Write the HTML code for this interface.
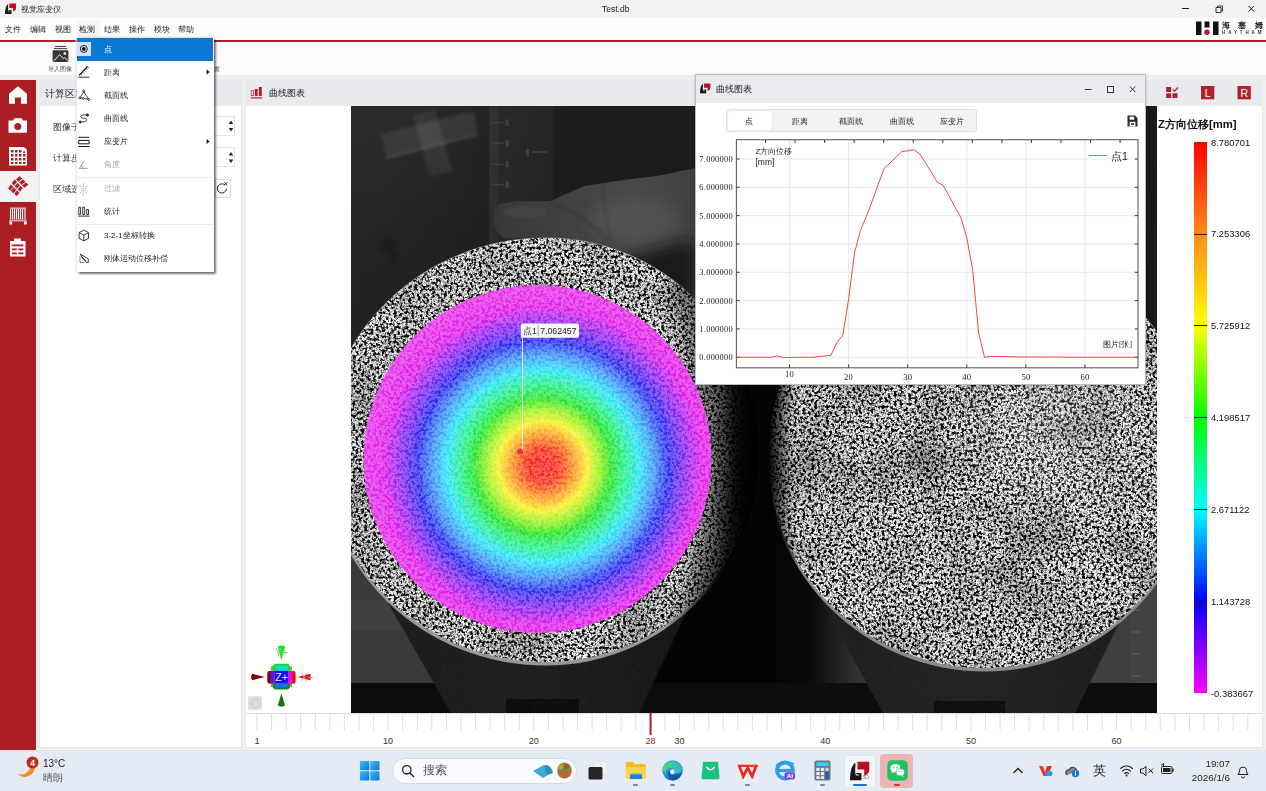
<!DOCTYPE html>
<html lang="zh"><head><meta charset="utf-8"><title>Test.db</title>
<style>
*{box-sizing:border-box;margin:0;padding:0}
html,body{width:1266px;height:791px;overflow:hidden;background:#f0f0f0;font-family:"Liberation Sans",sans-serif;color:#222}
.a{position:absolute}
.t{position:absolute;white-space:nowrap;line-height:1}
#titlebar{left:0;top:0;width:1266px;height:17.500px;background:#f3f3f3}
#menubar{left:0;top:17.500px;width:1266px;height:22.500px;background:#fbfcfc}
#redline{left:0;top:40px;width:1266px;height:2px;background:#b02028}
#toolbar{left:0;top:42px;width:1266px;height:34px;background:#fafbfb;border-bottom:1px solid #ececec}
.mi{position:absolute;top:25.800px;font-size:8px;line-height:1;color:#1a1a1a;white-space:nowrap}
#sidebar{left:0;top:80px;width:35.500px;height:670px;background:#aa1e24}
#sidesel{left:0;top:171px;width:35.500px;height:31px;background:#f2f2f2}
.panel{background:#fff}
.phead{background:#e8eaee}
.t,.mi{will-change:transform}

</style></head><body>
<svg width="0" height="0" style="position:absolute"><defs><symbol id="hlogo" viewBox="0 0 20 20"><path d="M0 19.300Q0 5.500 5.400 1.600V12H11.400V19.300z" fill="#1d1414"/><path d="M6 6.500V14H9.200" stroke="#fff" stroke-width=".9" fill="none"/><path d="M7.500 .7H19.300V9Q19.300 13 14.200 14.900V8.600H7.500z" fill="#c00d22"/></symbol></defs></svg>
<div class="a" id="titlebar"></div>
<svg class="a" style="left:5px;top:3px" width="11.500" height="11.500"><use href="#hlogo"/></svg>
<div class="t" style="left:21px;top:5.500px;font-size:8px;color:#222">视觉应变仪</div>
<div class="t" style="left:602px;top:5px;font-size:8.5px;color:#222">Test.db</div>
<svg class="a" style="left:1175px;top:0" width="91" height="18" viewBox="0 0 91 18"><g stroke="#222" stroke-width="1" fill="none"><path d="M7 8.5h7"/><path d="M41 7.5h5v5h-5z M42.5 7.5v-1.5h5v5h-1.5" stroke-width=".9"/><path d="M73.5 6l5.5 5.5M79 6l-5.500 5.500"/></g></svg>
<div class="a" id="menubar"></div>
<div class="a" style="left:77px;top:19px;width:23px;height:20px;background:#f5f6f6"></div>
<div class="mi" style="left:5px">文件</div><div class="mi" style="left:29.500px">编辑</div><div class="mi" style="left:54.500px">视图</div><div class="mi" style="left:79px">检测</div><div class="mi" style="left:103.500px">结果</div><div class="mi" style="left:128.500px">操作</div><div class="mi" style="left:153.500px">模块</div><div class="mi" style="left:178px">帮助</div>
<!-- brand logo -->
<svg class="a" style="left:1194px;top:20px" width="70" height="16" viewBox="0 0 70 16"><rect x="2" y="1.500" width="5.500" height="13.500" fill="#111"/><rect x="19" y="1.500" width="5.500" height="13.500" fill="#111"/><rect x="10.500" y="1.500" width="5" height="6" fill="#111"/><circle cx="13" cy="12.300" r="2.700" fill="#b01e26"/></svg>
<div class="t" style="left:1221.500px;top:21.500px;font-size:7.500px;font-weight:bold;letter-spacing:8.300px;color:#111">海塞姆</div>
<div class="t" style="left:1221.500px;top:30.500px;font-size:4.500px;letter-spacing:2.900px;color:#333;font-weight:bold">HAYTHAM</div>
<div class="a" id="redline"></div>
<div class="a" id="toolbar"></div>
<svg class="a" style="left:51px;top:45px" width="19" height="18" viewBox="51 45 19 18"><path d="M54.900 46.500h11.300" stroke="#4a4a4a" stroke-width="1.100"/><path d="M53.900 48.600h13.300" stroke="#4a4a4a" stroke-width="1.100"/><rect x="52.600" y="50.200" width="15.800" height="11.700" rx=".8" fill="#383838"/><path d="M53.700 61.200l5.800-6.500 4.100 4.050 1.200-1.250 3.100 3.200" stroke="#fff" stroke-width=".9" fill="none"/><circle cx="64.800" cy="53.500" r="1.300" fill="#fff"/></svg>
<div class="t" style="left:48.200px;top:65.700px;font-size:6.200px;color:#555">导入图像</div>
<div class="t" style="left:214px;top:66px;font-size:6px;color:#444">置</div>
<!-- sidebar -->
<div class="a" id="sidebar"></div>
<div class="a" id="sidesel"></div>
<svg class="a" style="left:0;top:80px" width="36" height="190" viewBox="0 0 36 190">
<!-- home -->
<path d="M18 6.200l9 7.500v10h-6v-6.200h-6v6.200h-6v-10z" fill="#fff"/>
<!-- camera -->
<path d="M8.500 40.500h4.500l1.300-2.200h7.400l1.300 2.200h4v12.300h-18.500z" fill="#fff"/><circle cx="17.800" cy="46.500" r="3.500" fill="#aa1e24"/>
<!-- grid -->
<path d="M9 67h15l3 3v15.500h-18z" fill="#fff"/>
<g fill="#aa1e24"><rect x="11" y="70" width="2.500" height="2.500"/><rect x="15" y="70" width="2.500" height="2.500"/><rect x="19" y="70" width="2.500" height="2.500"/><rect x="23" y="71.500" width="2" height="1.500"/>
<rect x="11" y="74" width="2.500" height="2.500"/><rect x="15" y="74" width="2.500" height="2.500"/><rect x="19" y="74" width="2.500" height="2.500"/><rect x="23" y="74" width="2.500" height="2.500"/>
<rect x="11" y="78" width="2.500" height="2.500"/><rect x="15" y="78" width="2.500" height="2.500"/><rect x="19" y="78" width="2.500" height="2.500"/><rect x="23" y="78" width="2.500" height="2.500"/>
<rect x="11" y="82" width="2.500" height="2"/><rect x="15" y="82" width="2.500" height="2"/><rect x="19" y="82" width="2.500" height="2"/><rect x="23" y="82" width="2.500" height="2"/></g>
<!-- selected mesh icon -->
<path d="M19.73 96.59L21.83 98.70L18.49 101.24L16.39 99.14zM23.07 99.85L25.02 101.81L21.52 104.35L19.57 102.40zM26.03 102.81L27.98 104.76L24.47 107.31L22.52 105.36zM14.63 99.76L16.58 101.86L14.03 105.36L12.08 103.26zM17.59 103.18L19.54 105.13L16.99 108.31L15.04 106.36zM20.46 106.13L22.42 108.08L20.03 111.27L18.08 109.32zM10.99 104.91L12.94 106.71L10.39 110.22L8.44 108.41zM13.87 107.72L15.97 109.68L13.43 112.86L11.32 110.91zM16.98 110.68L19.08 112.63L16.69 115.82L14.59 113.87z" fill="#ad1f25" stroke="#ad1f25" stroke-width=".7" stroke-linejoin="round"/>
<!-- film -->
<rect x="10" y="127.500" width="16" height="12" fill="#fff"/>
<g stroke="#aa1e24" stroke-width=".9"><path d="M11.500 129v10.500M13.500 129v10.500M15.500 129v10.500M17.500 129v10.500M19.500 129v10.500M21.500 129v10.500M23.500 129v10.500M25 129v10.500"/></g>
<rect x="10" y="127.500" width="16" height="1.200" fill="#aa1e24" opacity=".5"/>
<path d="M9.500 140.800h17" stroke="#fff" stroke-width="1.400" stroke-dasharray="1.200 .8"/>
<path d="M9.500 141.500h2.600v3h-2.600zM24 141.500h2.600v3h-2.600z" fill="#fff"/>
<!-- clipboard -->
<path d="M10 161h4v-2.500h7v2.500h4.500v15.500h-15.500z" fill="#fff"/>
<g fill="#aa1e24"><rect x="12" y="164.500" width="11.500" height="1.800"/><rect x="12" y="168.500" width="4.800" height="1.800"/><rect x="18.300" y="168.500" width="5.200" height="1.800"/><rect x="12" y="172.500" width="4.800" height="1.800"/><rect x="18.300" y="172.500" width="5.200" height="1.800"/></g>
</svg>

<div class="a panel" style="left:38.500px;top:80px;width:203px;height:667.500px;border:1px solid #e6e6e6;border-top:none"></div>
<div class="a phead" style="left:38.500px;top:80px;width:203px;height:25.500px"></div>
<div class="t" style="left:45px;top:88.600px;font-size:9.500px;color:#222">计算区域</div>
<div class="t" style="left:53px;top:122.500px;font-size:9px;color:#333">图像子区</div>
<div class="t" style="left:53px;top:153.500px;font-size:9px;color:#333">计算步长</div>
<div class="t" style="left:53px;top:184.500px;font-size:9px;color:#333">区域选择</div>
<div class="a" style="left:120px;top:116px;width:114.500px;height:19.500px;border:1px solid #e4e4e4;background:#fff"></div>
<div class="a" style="left:120px;top:147.300px;width:114.500px;height:20.200px;border:1px solid #e4e4e4;background:#fff"></div>
<svg class="a" style="left:227px;top:118px" width="8" height="48" viewBox="0 0 8 48"><g fill="#222"><path d="M4 2.500l2.300 3.500h-4.600z"/><path d="M1.700 10h4.600l-2.300 3.500z"/><path d="M4 34l2.300 3.500h-4.600z"/><path d="M1.700 41.500h4.600l-2.300 3.500z"/></g></svg>
<div class="a" style="left:214.500px;top:178.500px;width:16px;height:19px;border:1px solid #ddd;background:#fff"></div>
<svg class="a" style="left:214.700px;top:180.300px" width="14" height="16" viewBox="0 0 14 16"><path d="M10.200 5.200a4.600 4.600 0 1 0 1.300 3.600" fill="none" stroke="#222" stroke-width="1"/><path d="M9.200 2.200l3 3M12.200 2.200l-3 3" stroke="#222" stroke-width=".9"/></svg>

<div class="a panel" style="left:245px;top:80px;width:1017.500px;height:667.500px;border:1px solid #e6e6e6;border-top:none"></div>
<div class="a phead" style="left:245px;top:80px;width:1017.500px;height:25.500px"></div>
<svg class="a" style="left:250px;top:86px" width="13" height="13" viewBox="0 0 13 13"><rect x="1.200" y="4.700" width="2.200" height="5" fill="none" stroke="#b02028" stroke-width=".7"/><rect x="4.800" y="3" width="2.800" height="7" fill="#b02028"/><rect x="8.800" y="1" width="3" height="9" fill="#b02028"/><rect x=".8" y="11.300" width="11.400" height="1.200" fill="#b02028"/></svg>
<div class="t" style="left:268.500px;top:88.500px;font-size:8.700px;color:#222">曲线图表</div>
<!-- header right icons -->
<svg class="a" style="left:1160px;top:84px" width="100" height="18" viewBox="0 0 100 18"><g fill="#b02028"><rect x="6.200" y="3" width="5" height="5"/><rect x="6.200" y="9.300" width="5" height="4.700"/><rect x="12.500" y="9.300" width="5" height="4.700"/><path d="M12.300 6l1-1 1.300 1.300 3-3.300.9.900-3.900 4.200z"/><rect x="41" y="2" width="13.300" height="13.300"/><rect x="77.500" y="2" width="13.300" height="13.300"/></g>
<text x="47.700" y="12.500" font-family="Liberation Sans" font-size="10.500" fill="#fff" text-anchor="middle">L</text><text x="84.200" y="12.500" font-family="Liberation Sans" font-size="10.500" fill="#fff" text-anchor="middle">R</text></svg>

<svg class="a" style="left:351px;top:106px" width="806" height="607" viewBox="351 106 806 607">
<defs>
<filter id="spk" x="0" y="0" width="100%" height="100%" color-interpolation-filters="sRGB">
<feTurbulence type="fractalNoise" baseFrequency="0.6" numOctaves="2" seed="7"/><feColorMatrix type="matrix" values="0 0 0 1.700 -.03  0 0 0 1.700 -.03  0 0 0 1.700 -.03  0 0 0 0 1" result="A"/>
<feTurbulence type="fractalNoise" baseFrequency="0.34" numOctaves="2" seed="3"/><feColorMatrix type="matrix" values="0 0 0 5.500 -1.940  0 0 0 5.500 -1.940  0 0 0 5.500 -1.940  0 0 0 0 1" result="B"/>
<feComposite in="A" in2="B" operator="arithmetic" k1="1" k2="0" k3="0" k4="0.05"/><feGaussianBlur stdDeviation="0.4"/></filter>
<filter id="wn" x="0" y="0" width="100%" height="100%" color-interpolation-filters="sRGB">
<feTurbulence type="fractalNoise" baseFrequency="0.6" numOctaves="2" seed="7"/><feColorMatrix type="matrix" values="0 0 0 1.700 -.03  0 0 0 1.700 -.03  0 0 0 1.700 -.03  0 0 0 0 1" result="A"/>
<feTurbulence type="fractalNoise" baseFrequency="0.34" numOctaves="2" seed="3"/><feColorMatrix type="matrix" values="0 0 0 5.500 -1.940  0 0 0 5.500 -1.940  0 0 0 5.500 -1.940  0 0 0 0 1" result="B"/>
<feComposite in="A" in2="B" operator="arithmetic" k1="1" k2="0" k3="0" k4="0.05"/><feGaussianBlur stdDeviation="0.6"/>
<feColorMatrix type="matrix" values="0 0 0 0 1  0 0 0 0 1  0 0 0 0 1  .32 0 0 0 0"/></filter>
<filter id="lf" x="0" y="0" width="100%" height="100%" color-interpolation-filters="sRGB"><feTurbulence type="fractalNoise" baseFrequency="0.018" numOctaves="2" seed="9"/><feColorMatrix type="matrix" values="0 0 0 0 0  0 0 0 0 0  0 0 0 0 0  0 0 0 .6 -.24"/></filter>
<filter id="bl6" x="-30%" y="-30%" width="160%" height="160%"><feGaussianBlur stdDeviation="7"/></filter><filter id="bl2" x="-30%" y="-30%" width="160%" height="160%"><feGaussianBlur stdDeviation="1.500"/></filter><filter id="grain" x="0" y="0" width="100%" height="100%" color-interpolation-filters="sRGB"><feTurbulence type="fractalNoise" baseFrequency="0.9" numOctaves="1" seed="5"/><feColorMatrix type="matrix" values="0 0 0 0 1  0 0 0 0 1  0 0 0 0 1  0 0 0 1.200 -.6"/><feComposite in2="SourceGraphic" operator="in"/></filter>
<linearGradient id="bgg" x1="0" y1="0" x2="1" y2="0"><stop offset="0" stop-color="#262626"/><stop offset=".17" stop-color="#202020"/><stop offset=".3" stop-color="#1d1d1d"/><stop offset="1" stop-color="#1b1b1b"/></linearGradient><radialGradient id="tl" gradientUnits="userSpaceOnUse" cx="400" cy="120" r="170"><stop offset="0" stop-color="#fff" stop-opacity=".03"/><stop offset="1" stop-color="#fff" stop-opacity="0"/></radialGradient>
<linearGradient id="bgv" x1="0" y1="0" x2="0" y2="1"><stop offset="0" stop-color="#000" stop-opacity="0"/><stop offset=".55" stop-color="#000" stop-opacity=".15"/><stop offset="1" stop-color="#000" stop-opacity=".45"/></linearGradient>
<radialGradient id="rb" gradientUnits="userSpaceOnUse" cx="543" cy="466" r="182">
<stop offset="0" stop-color="#f21c18"/><stop offset=".09" stop-color="#f62a16"/><stop offset=".165" stop-color="#fa8a18"/><stop offset=".245" stop-color="#f6f020"/><stop offset=".31" stop-color="#98f01a"/><stop offset=".375" stop-color="#20e420"/><stop offset=".455" stop-color="#20ee90"/><stop offset=".53" stop-color="#24e4f6"/><stop offset=".61" stop-color="#3890f8"/><stop offset=".69" stop-color="#2424f0"/><stop offset=".785" stop-color="#8a22f0"/><stop offset=".875" stop-color="#e018ea"/><stop offset="1" stop-color="#e62eea"/></radialGradient>
<radialGradient id="dl" gradientUnits="userSpaceOnUse" cx="0" cy="0" r="1" gradientTransform="translate(440 450) scale(310 500)"><stop offset="0" stop-color="#000" stop-opacity="0"/><stop offset=".8" stop-color="#000" stop-opacity="0"/><stop offset=".88" stop-color="#000" stop-opacity=".45"/><stop offset=".95" stop-color="#000" stop-opacity=".9"/><stop offset="1" stop-color="#000" stop-opacity="1"/></radialGradient>
<radialGradient id="dr" gradientUnits="userSpaceOnUse" cx="0" cy="0" r="1" gradientTransform="translate(1290 460) scale(522 800)"><stop offset="0" stop-color="#000" stop-opacity="0"/><stop offset=".95" stop-color="#000" stop-opacity="0"/><stop offset=".985" stop-color="#000" stop-opacity=".7"/><stop offset="1" stop-color="#000" stop-opacity="1"/></radialGradient><radialGradient id="glare" gradientUnits="userSpaceOnUse" cx="1050" cy="425" r="120"><stop offset="0" stop-color="#fff" stop-opacity=".16"/><stop offset="1" stop-color="#fff" stop-opacity="0"/></radialGradient>
<linearGradient id="hg" x1="0" y1="0" x2="1" y2="0"><stop offset="0" stop-color="#383838"/><stop offset=".25" stop-color="#3e3e3e"/><stop offset=".7" stop-color="#494949"/><stop offset="1" stop-color="#404040"/></linearGradient>
<linearGradient id="pg" x1="0" y1="0" x2="1" y2="0"><stop offset="0" stop-color="#1c1c1c"/><stop offset=".5" stop-color="#1e1e1e"/><stop offset="1" stop-color="#151515"/></linearGradient>
<linearGradient id="pg2" x1="0" y1="0" x2="1" y2="0"><stop offset="0" stop-color="#1e1e1e"/><stop offset=".5" stop-color="#232323"/><stop offset="1" stop-color="#1c1c1c"/></linearGradient>
<linearGradient id="midg" x1="0" y1="0" x2="1" y2="0"><stop offset="0" stop-color="#050505"/><stop offset=".35" stop-color="#0a0a0a"/><stop offset="1" stop-color="#454545"/></linearGradient>
<clipPath id="cl"><path d="M546 238A222 212 0 0 0 546 662A212 212 0 0 0 546 238z"/></clipPath>
<clipPath id="cr"><path d="M985 244A217 212 0 0 0 985 668A212 212 0 0 0 985 244z"/></clipPath>
<linearGradient id="rimL" gradientUnits="userSpaceOnUse" x1="680" y1="0" x2="735" y2="0"><stop offset="0" stop-color="#969696"/><stop offset="1" stop-color="#050505"/></linearGradient><linearGradient id="rimR" gradientUnits="userSpaceOnUse" x1="770" y1="0" x2="800" y2="0"><stop offset="0" stop-color="#050505"/><stop offset="1" stop-color="#8a8a8a"/></linearGradient><clipPath id="clo"><path d="M546 237.500A223 214 0 0 0 546 665.500A213 214 0 0 0 546 237.500z"/></clipPath><clipPath id="cro"><path d="M985 243.500A218 214 0 0 0 985 671.500A213 214 0 0 0 985 243.500z"/></clipPath><clipPath id="crb"><circle cx="537.500" cy="459" r="174"/></clipPath>
</defs>
<!-- background -->
<rect x="351" y="106" width="806" height="607" fill="url(#bgg)"/>
<rect x="351" y="106" width="400" height="200" fill="url(#tl)"/><rect x="489" y="106" width="64" height="200" fill="#fff" opacity=".035"/>
<rect x="489" y="106" width="9" height="200" fill="#fff" opacity=".035"/>
<g stroke="#424242" stroke-width="1.300"><path d="M491 122.600h12.500M491 143h12.500M491 164.300h12.500M491 184.500h12.500M531 152h17"/></g>
<g fill="#404040"><rect x="505.500" y="119.500" width="3.500" height="6.500"/><rect x="505.500" y="140" width="3.500" height="6.500"/><rect x="505.500" y="161" width="3.500" height="6.500"/><rect x="505.500" y="181.500" width="3.500" height="6.500"/><rect x="526" y="149" width="3" height="6.500"/></g>
<!-- tape cross -->
<g filter="url(#bl2)"><path d="M381 134l92-23 6 24-92 24z" fill="#fff" opacity=".085"/><path d="M413 115l22-6 17 62-22 6z" fill="#fff" opacity=".07"/><path d="M386 158l90-23" stroke="#fff" stroke-width="1.500" opacity=".12"/></g>
<path d="M381 240l8-4 3 6 5-2 2 5-6 3 5 12-5 3-6-13-6 3-2-5 6-3z" fill="#121212" opacity=".45" filter="url(#bl2)"/>
<rect x="351" y="106" width="806" height="607" fill="url(#bgv)"/>
<!-- lower left clutter -->
<path d="M351 440l28 46 18 80 4 0h-50z" fill="#272727"/>
<path d="M351 462l16-22 14 42-30 40z" fill="#333"/>
<path d="M351 548h30l62 138h-92z" fill="#3a3a3a"/>
<path d="M351 600h50l12 30h-62z" fill="#454545" opacity=".6"/>

<!-- dark right/bottom areas -->
<path d="M735 384h422v329h-520l50-110z" fill="#040404"/>
<path d="M772 500h40l70 186h-110z" fill="url(#midg)"/>
<path d="M1090 580h67v109h-95z" fill="#3e3e3e"/>
<rect x="1130" y="580" width="27" height="109" fill="#464646" opacity=".6"/>
<g stroke="#606060" stroke-width="1"><path d="M1132 610h9M1132 632h9M1132 654h9M1132 676h9"/></g>
<rect x="351" y="683" width="806" height="30" fill="#0d0d0d"/>
<!-- hand -->
<path d="M494.500 226L493.700 214.500Q494 206 500 203.500L517 201.200L550 201.200L584 186L622 180.300L660 175.600L695 168V310L640 275L590 248L544 237.500L506 238.500Q497 234 494.500 226z" fill="url(#hg)"/>
<ellipse cx="634" cy="220" rx="44" ry="22" fill="#565656" opacity=".7" filter="url(#bl6)"/>
<ellipse cx="525" cy="212" rx="22" ry="6" fill="#4a4a4a" opacity=".6" filter="url(#bl2)"/>
<path d="M550 203q34 10 58 38" stroke="#242424" stroke-width="1.500" fill="none" opacity=".5" filter="url(#bl2)"/>
<path d="M603 186q2 30 8 56" stroke="#282828" stroke-width="1.200" fill="none" opacity=".45" filter="url(#bl2)"/>
<path d="M610 262l85-22v72l-50-26z" fill="#151515" opacity=".9" filter="url(#bl6)"/>
<!-- pedestals -->
<path d="M388 603l63 110h188l49-104z" fill="url(#pg)"/>
<path d="M822 602l61 111h192l50-102z" fill="url(#pg2)"/>
<rect x="506" y="699" width="73" height="14" fill="#0c0c0c"/><rect x="934" y="701" width="71" height="12" fill="#0e0e0e"/>
<g opacity=".16"><path d="M388 603l63 110h188l49-104z" filter="url(#grain)"/><path d="M822 602l61 111h192l50-102z" filter="url(#grain)"/></g>
<!-- left disk -->
<g clip-path="url(#clo)"><rect x="320" y="230" width="450" height="440" fill="url(#rimL)"/><g clip-path="url(#cl)"><rect x="351" y="230" width="410" height="440" filter="url(#spk)"/><rect x="351" y="230" width="410" height="440" filter="url(#lf)"/></g><rect x="320" y="230" width="450" height="440" fill="url(#dl)"/></g>
<!-- right disk -->
<g clip-path="url(#cro)"><rect x="760" y="240" width="400" height="436" fill="url(#rimR)"/><g clip-path="url(#cr)"><rect x="765" y="240" width="392" height="432" filter="url(#spk)"/><rect x="765" y="240" width="392" height="432" filter="url(#lf)"/><rect x="765" y="240" width="440" height="432" fill="url(#glare)"/></g><rect x="760" y="240" width="440" height="436" fill="url(#dr)"/></g>
<!-- rainbow -->
<circle cx="537.500" cy="459" r="174" fill="url(#rb)"/>
<g clip-path="url(#crb)"><rect x="360" y="282" width="356" height="356" filter="url(#wn)"/></g>
<!-- label -->
<path d="M522.500 337v114" stroke="#f4f4f4" stroke-width="1" opacity=".85"/>
<circle cx="520" cy="451.500" r="3" fill="#e8334f"/>
<rect x="520.800" y="323.400" width="58.200" height="14.300" rx="1.800" fill="#f8f8f6"/>
<path d="M538.200 325.500v10.500" stroke="#aaa" stroke-width="1.100"/>
<text x="523" y="334.400" font-family="Liberation Sans, sans-serif" font-size="8.600" fill="#222">点1</text>
<text x="540.300" y="334.400" font-family="Liberation Sans, sans-serif" font-size="8.700" fill="#222">7.062457</text>
</svg>

<div class="t" style="left:1158px;top:118.500px;font-size:11.300px;font-weight:bold;color:#111">Z方向位移[mm]</div>
<div class="a" style="left:1193.500px;top:142px;width:13.500px;height:551px;background:linear-gradient(to bottom,#ff0000 0%,#ff8a1c 16.670%,#ffff00 33.330%,#00ff00 50%,#00ffff 66.670%,#0000ff 83.330%,#ff00ff 100%)"></div>
<div class="t" style="left:1210.500px;top:137.6px;font-size:9.400px;color:#111">8.780701</div>
<div class="t" style="left:1210.500px;top:229.4px;font-size:9.400px;color:#111">7.253306</div>
<div class="a" style="left:1193.500px;top:233.5px;width:13.500px;height:1px;background:#222"></div>
<div class="t" style="left:1210.500px;top:321.3px;font-size:9.400px;color:#111">5.725912</div>
<div class="a" style="left:1193.500px;top:325.4px;width:13.500px;height:1px;background:#222"></div>
<div class="t" style="left:1210.500px;top:413.1px;font-size:9.400px;color:#111">4.198517</div>
<div class="a" style="left:1193.500px;top:417.2px;width:13.500px;height:1px;background:#222"></div>
<div class="t" style="left:1210.500px;top:504.9px;font-size:9.400px;color:#111">2.671122</div>
<div class="a" style="left:1193.500px;top:509.0px;width:13.500px;height:1px;background:#222"></div>
<div class="t" style="left:1210.500px;top:596.7px;font-size:9.400px;color:#111">1.143728</div>
<div class="a" style="left:1193.500px;top:600.9px;width:13.500px;height:1px;background:#222"></div>
<div class="t" style="left:1210.500px;top:688.6px;font-size:9.400px;color:#111">-0.383667</div>

<svg class="a" style="left:246px;top:713px" width="1016" height="34" viewBox="246 713 1016 34">
<path d="M257.0 713v17M271.6 713v17M286.1 713v17M300.7 713v17M315.3 713v17M329.9 713v17M344.4 713v17M359.0 713v17M373.6 713v17M388.1 713v17M402.7 713v17M417.3 713v17M431.8 713v17M446.4 713v17M461.0 713v17M475.6 713v17M490.1 713v17M504.7 713v17M519.3 713v17M533.8 713v17M548.4 713v17M563.0 713v17M577.5 713v17M592.1 713v17M606.7 713v17M621.2 713v17M635.8 713v17M650.4 713v17M665.0 713v17M679.5 713v17M694.1 713v17M708.7 713v17M723.2 713v17M737.8 713v17M752.4 713v17M767.0 713v17M781.5 713v17M796.1 713v17M810.7 713v17M825.2 713v17M839.8 713v17M854.4 713v17M868.9 713v17M883.5 713v17M898.1 713v17M912.6 713v17M927.2 713v17M941.8 713v17M956.4 713v17M970.9 713v17M985.5 713v17M1000.1 713v17M1014.6 713v17M1029.2 713v17M1043.8 713v17M1058.3 713v17M1072.9 713v17M1087.5 713v17M1102.1 713v17M1116.6 713v17M1131.2 713v17M1145.8 713v17M1160.3 713v17M1174.9 713v17M1189.5 713v17M1204.1 713v17M1218.6 713v17M1233.2 713v17M1247.8 713v17" stroke="#dadada" stroke-width=".9"/>
<path d="M246 713.500H1262" stroke="#e0e0e0" stroke-width="1"/><rect x="649.600" y="713" width="2" height="22" fill="#b02028"/>
<text x="257.0" y="743.500" font-family="Liberation Sans, sans-serif" font-size="9" fill="#333" text-anchor="middle">1</text>
<text x="388.1" y="743.500" font-family="Liberation Sans, sans-serif" font-size="9" fill="#333" text-anchor="middle">10</text>
<text x="533.8" y="743.500" font-family="Liberation Sans, sans-serif" font-size="9" fill="#333" text-anchor="middle">20</text>
<text x="679.5" y="743.500" font-family="Liberation Sans, sans-serif" font-size="9" fill="#333" text-anchor="middle">30</text>
<text x="825.2" y="743.500" font-family="Liberation Sans, sans-serif" font-size="9" fill="#333" text-anchor="middle">40</text>
<text x="970.9" y="743.500" font-family="Liberation Sans, sans-serif" font-size="9" fill="#333" text-anchor="middle">50</text>
<text x="1116.6" y="743.500" font-family="Liberation Sans, sans-serif" font-size="9" fill="#333" text-anchor="middle">60</text>
<text x="650.4" y="743.500" font-family="Liberation Sans, sans-serif" font-size="9" fill="#b02028" text-anchor="middle">28</text>
</svg>
<svg class="a" style="left:246px;top:640px" width="80" height="73" viewBox="246 640 80 73">
<rect x="248" y="696.200" width="14" height="13.600" rx="1" fill="#d6dee8"/><path d="M258.800 700.300a4.300 4.300 0 1 0 1.200 3" fill="none" stroke="#c0c8d2" stroke-width="1"/><path d="M257.500 698.500l2 1.800-2.400.8z" fill="#c0c8d2"/>
<path d="M277.600 646.500q3.800-2 7.600 0l-3.800 14z" fill="#18f018"/>
<text x="281.500" y="655.500" font-family="Liberation Sans, sans-serif" font-size="10.500" fill="#a8a8a8" text-anchor="middle" opacity=".9">Y+</text>
<path d="M281.400 693.600l3.600 12q-3.600 2.200-7.200 0z" fill="#0c7a0c"/>
<path d="M264.700 677l-12.500 3.300q-2.200-3.300 0-6.600z" fill="#7a0808"/>
<path d="M297.600 677l12.500-3.300q2.200 3.300 0 6.600z" fill="#f01010"/>
<text x="307" y="681" font-family="Liberation Sans, sans-serif" font-size="10.500" fill="#a8a8a8" text-anchor="middle" opacity=".9">X+</text>
<g>
<path d="M270.800 666.500h4v4h-4zM288 666.500h4v4h-4zM270.800 683h4v4h-4zM288 683h4v4h-4z" fill="#a8a020"/>
<path d="M274.800 663.800h13.200l2 2.200v5h-17.200v-5z" fill="#10e010"/>
<path d="M274.800 689.600h13.200l2-2.200v-4h-17.200v4z" fill="#108a20"/>
<path d="M268.300 671h4v12.500h-4l-1-2v-8.500z" fill="#7a0a0a"/>
<path d="M294.600 671h-4v12.500h4l1-2v-8.500z" fill="#f00808"/>
<rect x="274.800" y="665.800" width="13.200" height="5.200" fill="#10d8d8"/>
<rect x="274.800" y="683.500" width="13.200" height="4" fill="#2070e0"/>
<rect x="270.300" y="670.900" width="4.500" height="12.600" fill="#7010d0"/>
<rect x="288" y="670.900" width="4.500" height="12.600" fill="#e010e0"/>
<rect x="274.800" y="670.900" width="13.200" height="12.600" fill="#1212ee"/>
</g>
<text x="281.500" y="681.300" font-family="Liberation Sans, sans-serif" font-size="10.500" fill="#e8e8e8" text-anchor="middle">Z+</text>
</svg>

<div class="a" style="left:694.5px;top:74px;width:451.5px;height:310.500px;background:#fff;border:1px solid #b9bcc2;box-shadow:0 1px 3px rgba(0,0,0,.2)"></div>
<div class="a" style="left:695.5px;top:75px;width:449.5px;height:27.500px;background:#e9ebef"></div>
<svg class="a" style="left:699.800px;top:83.400px" width="10.800" height="10.800"><use href="#hlogo"/></svg>
<div class="t" style="left:715.500px;top:85px;font-size:8.500px;color:#222">曲线图表</div>
<svg class="a" style="left:1078px;top:80px" width="66" height="18" viewBox="1078 80 66 18"><g stroke="#333" stroke-width="1" fill="none"><path d="M1085 89.500h6.500"/><rect x="1107.500" y="86.500" width="6" height="6"/><path d="M1129.800 86.500l5.500 5.500M1135.300 86.500l-5.500 5.500"/></g></svg>
<div class="a" style="left:725.500px;top:109px;width:251px;height:23px;background:#f3f3f3;border:1px solid #e0e0e0;border-radius:2.500px"></div>
<div class="a" style="left:727.500px;top:111px;width:44px;height:19px;background:#fff;border-radius:2px;box-shadow:0 0 1px rgba(0,0,0,.25)"></div>
<div class="t" style="left:719.25px;width:60px;text-align:center;top:117.500px;font-size:7.800px;color:#222">点</div>
<div class="t" style="left:770px;width:60px;text-align:center;top:117.500px;font-size:7.800px;color:#222">距离</div>
<div class="t" style="left:821.25px;width:60px;text-align:center;top:117.500px;font-size:7.800px;color:#222">截面线</div>
<div class="t" style="left:871.5px;width:60px;text-align:center;top:117.500px;font-size:7.800px;color:#222">曲面线</div>
<div class="t" style="left:922px;width:60px;text-align:center;top:117.500px;font-size:7.800px;color:#222">应变片</div>
<svg class="a" style="left:1127px;top:114.500px" width="11" height="12" viewBox="0 0 11 12"><path d="M.5 .5h7.500l2.500 2.500v8.500h-10z" fill="#2a2a2a"/><rect x="2.600" y="1.700" width="4.600" height="3" fill="#fff"/><rect x="2.600" y="6.800" width="5.800" height="4.700" fill="#fff"/><rect x="4" y="8.300" width="3" height="1.600" fill="#2a2a2a"/></svg>
<svg class="a" style="left:695px;top:133px" width="451" height="250" viewBox="695 133 451 250">
<path d="M736.4 357.25H1138M736.4 328.93H1138M736.4 300.61H1138M736.4 272.29H1138M736.4 243.97H1138M736.4 215.65H1138M736.4 187.33H1138M736.4 159.01H1138M789.57 139.7V367.8M848.64 139.7V367.8M907.72 139.7V367.8M966.79 139.7V367.8M1025.87 139.7V367.8M1084.94 139.7V367.8" stroke="#e8e8e8" stroke-width="1" fill="none"/>
<rect x="736.4" y="139.7" width="401.6" height="228.1" fill="none" stroke="#636363" stroke-width="1.150"/>
<path d="M736.4 357.25h3.300M1138 357.25h-3.300M736.4 328.93h3.300M1138 328.93h-3.300M736.4 300.61h3.300M1138 300.61h-3.300M736.4 272.29h3.300M1138 272.29h-3.300M736.4 243.97h3.300M1138 243.97h-3.300M736.4 215.65h3.300M1138 215.65h-3.300M736.4 187.33h3.300M1138 187.33h-3.300M736.4 159.01h3.300M1138 159.01h-3.300M765.50 139.7v3.300M795.05 139.7v3.300M824.60 139.7v3.300M854.15 139.7v3.300M883.70 139.7v3.300M913.25 139.7v3.300M942.80 139.7v3.300M972.35 139.7v3.300M1001.90 139.7v3.300M1031.45 139.7v3.300M1061.00 139.7v3.300M1090.55 139.7v3.300M1120.10 139.7v3.300M789.57 367.8v-3.300M848.64 367.8v-3.300M907.72 367.8v-3.300M966.79 367.8v-3.300M1025.87 367.8v-3.300M1084.94 367.8v-3.300" stroke="#3a3a3a" stroke-width="1" fill="none"/>
<text x="733" y="360.2" font-family="Liberation Serif, serif" font-size="8.400" letter-spacing=".28" fill="#222" text-anchor="end">0.000000</text>
<text x="733" y="331.9" font-family="Liberation Serif, serif" font-size="8.400" letter-spacing=".28" fill="#222" text-anchor="end">1.000000</text>
<text x="733" y="303.6" font-family="Liberation Serif, serif" font-size="8.400" letter-spacing=".28" fill="#222" text-anchor="end">2.000000</text>
<text x="733" y="275.3" font-family="Liberation Serif, serif" font-size="8.400" letter-spacing=".28" fill="#222" text-anchor="end">3.000000</text>
<text x="733" y="247.0" font-family="Liberation Serif, serif" font-size="8.400" letter-spacing=".28" fill="#222" text-anchor="end">4.000000</text>
<text x="733" y="218.7" font-family="Liberation Serif, serif" font-size="8.400" letter-spacing=".28" fill="#222" text-anchor="end">5.000000</text>
<text x="733" y="190.3" font-family="Liberation Serif, serif" font-size="8.400" letter-spacing=".28" fill="#222" text-anchor="end">6.000000</text>
<text x="733" y="162.0" font-family="Liberation Serif, serif" font-size="8.400" letter-spacing=".28" fill="#222" text-anchor="end">7.000000</text>
<text x="789.6" y="376.6" font-family="Liberation Serif, serif" font-size="8.600" letter-spacing=".2" fill="#222" text-anchor="middle">10</text>
<text x="848.6" y="379.6" font-family="Liberation Serif, serif" font-size="8.600" letter-spacing=".2" fill="#222" text-anchor="middle">20</text>
<text x="907.7" y="379.6" font-family="Liberation Serif, serif" font-size="8.600" letter-spacing=".2" fill="#222" text-anchor="middle">30</text>
<text x="966.8" y="379.6" font-family="Liberation Serif, serif" font-size="8.600" letter-spacing=".2" fill="#222" text-anchor="middle">40</text>
<text x="1025.9" y="379.6" font-family="Liberation Serif, serif" font-size="8.600" letter-spacing=".2" fill="#222" text-anchor="middle">50</text>
<text x="1084.9" y="379.6" font-family="Liberation Serif, serif" font-size="8.600" letter-spacing=".2" fill="#222" text-anchor="middle">60</text>
<polyline points="736.40,357.25 742.31,357.25 748.22,357.25 754.12,357.25 760.03,357.25 765.94,357.25 771.85,357.25 777.75,355.98 783.66,357.67 789.57,357.53 795.48,357.25 801.38,357.25 807.29,357.25 813.20,357.25 819.11,356.40 825.01,355.98 830.92,355.27 836.83,342.81 842.74,335.27 848.64,299.19 854.55,252.75 860.46,230.38 866.37,216.50 872.27,200.92 878.18,184.50 884.09,168.64 890.00,162.97 895.90,157.31 901.81,151.65 907.72,150.80 913.62,149.66 919.53,153.63 925.44,162.69 931.35,172.32 937.25,182.23 943.16,185.35 949.07,195.83 954.98,207.15 960.88,217.63 966.79,237.74 972.70,270.31 978.61,332.89 984.51,357.25 990.42,356.40 996.33,356.40 1002.24,356.54 1008.14,356.68 1014.05,356.83 1019.96,356.97 1025.87,356.97 1031.78,356.97 1037.68,356.97 1043.59,356.97 1049.50,356.97 1055.40,356.97 1061.31,357.11 1067.22,357.25 1073.13,357.25 1079.03,357.25 1084.94,357.25 1090.85,357.25 1096.76,357.25 1102.66,357.25 1108.57,357.25 1114.48,357.25 1120.39,357.25 1126.30,357.25 1132.20,357.25 1138.11,357.25" fill="none" stroke="#f4454a" stroke-width="1" stroke-linejoin="round"/>
<path d="M1088.600 155.500h17.800" stroke="#f25a5e" stroke-width="1"/>
<text x="1111" y="159.500" font-family="Liberation Sans, sans-serif" font-size="10.500" fill="#222">点1</text>
<text x="755.500" y="153.800" font-family="Liberation Sans, sans-serif" font-size="8" fill="#222">Z方向位移</text>
<text x="755.500" y="165.200" font-family="Liberation Sans, sans-serif" font-size="8.500" fill="#222">[mm]</text>
<text x="1103" y="347" font-family="Liberation Serif, serif" font-size="7.500" fill="#222">图片[张]</text>
</svg>

<div class="a" style="left:76.500px;top:38px;width:137.500px;height:234px;background:#fff;box-shadow:1.500px 1.500px 2px rgba(0,0,0,.5), 0 0 2.500px rgba(0,0,0,.3)"></div>
<div class="a" style="left:74.500px;top:38px;width:2px;height:234px;background:linear-gradient(to right,rgba(244,244,244,0),rgba(238,238,238,.95))"></div><div class="a" style="left:76.500px;top:38px;width:136px;height:22.500px;background:#0a78d4"></div>
<div class="a" style="left:77px;top:42px;width:13.500px;height:13.500px;background:#cfe4f8"></div>
<div class="a" style="left:77px;top:177px;width:135.500px;height:1px;background:#ececec"></div>
<div class="a" style="left:77px;top:223.500px;width:135.500px;height:1px;background:#ececec"></div>
<div class="t" style="left:104px;top:45.75px;font-size:8px;color:#fff">点</div>
<div class="t" style="left:104px;top:68.75px;font-size:8px;color:#1a1a1a">距离</div>
<div class="t" style="left:104px;top:91.75px;font-size:8px;color:#1a1a1a">截面线</div>
<div class="t" style="left:104px;top:114.75px;font-size:8px;color:#1a1a1a">曲面线</div>
<div class="t" style="left:104px;top:138.25px;font-size:8px;color:#1a1a1a">应变片</div>
<div class="t" style="left:104px;top:161.25px;font-size:8px;color:#a8a8a8">角度</div>
<div class="t" style="left:104px;top:185.25px;font-size:8px;color:#a8a8a8">过滤</div>
<div class="t" style="left:104px;top:208.25px;font-size:8px;color:#1a1a1a">统计</div>
<div class="t" style="left:104px;top:231.75px;font-size:8px;color:#1a1a1a">3-2-1坐标转换</div>
<div class="t" style="left:104px;top:255.25px;font-size:8px;color:#1a1a1a">刚体运动位移补偿</div>
<svg class="a" style="left:76px;top:38px" width="138" height="234" viewBox="76 38 138 234">
<g fill="#111"><path d="M206.600 69.500l3 2.500-3 2.500zM206.600 139l3 2.500-3 2.500z"/></g>
<circle cx="83.800" cy="48.900" r="3.500" fill="none" stroke="#111" stroke-width=".9"/><circle cx="83.800" cy="48.900" r="1.900" fill="#111"/>
<g stroke="#151515" fill="none"><path d="M78.300 77.200h11" stroke-width=".9"/><path d="M79 75.300l8.600-8.800" stroke-width="1.200"/><path d="M80.700 73.600l1.500 1.500M82.400 71.800l1.500 1.500M84.100 70.100l1.500 1.500M85.800 68.300l1.500 1.500M87.500 66.600l1.300 1.300" stroke-width=".7"/></g>
<g stroke="#151515" stroke-width=".8" fill="none"><path d="M83.800 91.500l-3.800 6.300 8.600 1.500z"/><circle cx="83.800" cy="91" r="1" fill="#fff"/><circle cx="79.800" cy="97.800" r="1" fill="#fff"/><circle cx="88.800" cy="99.400" r="1" fill="#fff"/><circle cx="83.300" cy="98.500" r=".9" fill="#fff"/></g>
<g stroke="#151515" stroke-width=".9" fill="none"><path d="M87 115.200c-3-.8-6.500-.3-6.300 1.600s6 1 6 3-3.500 2.300-6.200 1.800"/><circle cx="87.500" cy="115" r="1" fill="#151515"/><circle cx="80.200" cy="122" r="1" fill="#151515"/></g>
<g stroke="#151515" stroke-width="1" fill="none"><path d="M78.500 137.300h10.800M78.500 146.500h10.800M78.700 140.400h10.400v3.400h-10.400z"/></g>
<g stroke="#8c8c8c" stroke-width=".9" fill="none"><path d="M79.300 168.400h8.300M79.300 168.400l5-7.600M82.500 168.400a3.200 3.200 0 0 0-1.200-3"/></g>
<g stroke="#999" stroke-width=".9" fill="none" stroke-dasharray="1.300 1"><path d="M83.400 183.500v12M80 185.500q3.500 4 0 8M87 185.500q-3.500 4 0 8"/></g>
<g stroke="#151515" stroke-width=".85" fill="none"><path d="M78 216.100h11.500M78.800 207.200h1.800v7.300h-1.800zM82.700 207.200h2v7.300h-2zM86.700 209.500h1.800v5h-1.800z"/></g>
<g stroke="#151515" stroke-width=".85" fill="none" stroke-linejoin="round"><path d="M83.800 230l4.700 2.600v5.700l-4.700 2.600-4.700-2.600v-5.700zM79.200 232.700l4.600 2.500 4.600-2.500M83.800 235.200v5.600"/></g>
<g stroke="#151515" stroke-width=".85" fill="none"><path d="M80 254l8.300 4.800v3.600h-2.300zM81.500 257.500l4.500 3" /><path d="M80 256.500v6h4.500" stroke-dasharray="1.200 .9"/></g>
</svg>

<div class="a" style="left:0;top:750px;width:1266px;height:41px;background:#e5ebf5;border-top:1px solid #dfe3ea"></div>
<svg class="a" style="left:14px;top:754px" width="28" height="30" viewBox="14 754 28 30"><defs><linearGradient id="mo" x1="0" y1="0" x2="1" y2="1"><stop offset="0" stop-color="#f9c030"/><stop offset="1" stop-color="#f07a18"/></linearGradient></defs><path d="M35 765a10.500 10.500 0 0 1-18 8.500a9.500 9.500 0 0 0 13-11.500z" fill="url(#mo)"/><circle cx="32.500" cy="762.500" r="6" fill="#c42b1c"/><text x="32.500" y="766" font-family="Liberation Sans, sans-serif" font-size="8.500" font-weight="bold" fill="#fff" text-anchor="middle">4</text></svg>
<div class="t" style="left:43px;top:759px;font-size:10px;color:#1a1a1a">13°C</div>
<div class="t" style="left:43px;top:773px;font-size:9.500px;color:#5a5a5a">晴朗</div>
<svg class="a" style="left:360px;top:761px" width="20" height="20" viewBox="0 0 20 20"><defs><linearGradient id="wg" x1="0" y1="0" x2="1" y2="1"><stop offset="0" stop-color="#3fc3f7"/><stop offset="1" stop-color="#0a6fd6"/></linearGradient></defs><g fill="url(#wg)"><rect x="0" y="0" width="9.300" height="9.300" rx=".8"/><rect x="10.200" y="0" width="9.300" height="9.300" rx=".8"/><rect x="0" y="10.200" width="9.300" height="9.300" rx=".8"/><rect x="10.200" y="10.200" width="9.300" height="9.300" rx=".8"/></g></svg>
<div class="a" style="left:392px;top:758px;width:185px;height:25.500px;border-radius:13px;background:#f8fafd;border:1px solid #d4dae4"></div>
<svg class="a" style="left:401px;top:764px" width="14" height="14" viewBox="0 0 14 14"><circle cx="5.800" cy="5.800" r="4.200" fill="none" stroke="#222" stroke-width="1.300"/><path d="M8.800 8.800l3.700 3.700" stroke="#222" stroke-width="1.400" stroke-linecap="round"/></svg>
<div class="t" style="left:423px;top:765px;font-size:11.800px;color:#555">搜索</div>
<svg class="a" style="left:532px;top:762px" width="44" height="18" viewBox="532 762 44 18"><path d="M533 771l11-6 9 7-10 6z" fill="#3aa8d8"/><path d="M545 765q5-1 8 7-3 4-7 1z" fill="#2a8cc0"/><circle cx="564.500" cy="771.300" r="7.200" fill="#b8683a"/><path d="M557.500 769.500a7 7 0 0 1 14 0z" fill="#5aa844"/><circle cx="561" cy="767" r="2.300" fill="#e8a020"/><circle cx="566.500" cy="766.500" r="2.500" fill="#d83a2a"/><circle cx="564" cy="769" r="2" fill="#4a9a3a"/></svg>
<svg class="a" style="left:587px;top:760px" width="22" height="22" viewBox="0 0 22 22"><rect x="7" y="2" width="13.500" height="12.500" rx="1.500" fill="#f2f2f2" stroke="#dcdcdc" stroke-width=".6"/><rect x="1.500" y="7" width="14" height="12.500" rx="1.500" fill="#262626"/></svg>
<svg class="a" style="left:625px;top:760px" width="22" height="22" viewBox="0 0 22 22"><path d="M.8 3.500q0-1.500 1.500-1.500h5.500l2 2h9.500q1.500 0 1.500 1.500v12q0 1.500-1.500 1.500h-17q-1.500 0-1.500-1.500z" fill="#f5b921"/><path d="M.8 7h20v10.500q0 1.500-1.500 1.500h-17q-1.500 0-1.500-1.500z" fill="#fdd44c"/><path d="M5 15h12v4h-12z" fill="#1f84d6"/><path d="M6.500 13.500h9q1.500 0 1.500 1.500h-12q0-1.500 1.500-1.500z" fill="#3aa0ea"/></svg>
<svg class="a" style="left:662px;top:759.500px" width="21" height="21" viewBox="0 0 21 21"><defs><linearGradient id="eg" x1="0" y1="0" x2="1" y2="1"><stop offset="0" stop-color="#35c1f1"/><stop offset=".5" stop-color="#1b88d6"/><stop offset="1" stop-color="#0c4f9e"/></linearGradient><linearGradient id="eg2" x1="0" y1="0" x2="1" y2="0"><stop offset="0" stop-color="#54d66a"/><stop offset="1" stop-color="#2bb7d8"/></linearGradient></defs><circle cx="10.500" cy="10.500" r="10.200" fill="url(#eg)"/><path d="M1 8.500a10 10 0 0 1 19 0q.8 4-3.500 4.800h-5q1.500-1.500.5-3.500-1.800-2.500-5-1.500-3 1.200-3.500 5-2.800-2.300-2.500-4.800z" fill="url(#eg2)"/><path d="M7.800 10.500q2-2 3.800 0 1 2-1 3.800 3.500 2.500 7.500-.5-1.500 5.500-7 6-5-1-5-5.500 0-2 1.700-3.800z" fill="#0e57a8"/><ellipse cx="10.300" cy="11.800" rx="2.300" ry="2.600" fill="#e5ebf5"/></svg>
<svg class="a" style="left:700.500px;top:761px" width="19" height="19" viewBox="0 0 19 19"><path d="M2 .8h15l1.500 16q0 1.500-1.500 1.500h-15q-1.500 0-1.500-1.500z" fill="#19c37d"/><path d="M5.800 6.500q3.700 4.500 7.400 0" stroke="#fff" stroke-width="1.400" fill="none" stroke-linecap="round"/></svg>
<svg class="a" style="left:736.500px;top:763.500px" width="21.500" height="15" viewBox="0 0 21.500 15"><path d="M.8 1.800H20.700" stroke="#ea2c1c" stroke-width="2.200" fill="none"/><path d="M2.200 1.500L6.300 12.500L10.750 3.800L15.200 12.500L19.300 1.500" stroke="#ea2c1c" stroke-width="2.800" fill="none" stroke-linejoin="miter" stroke-miterlimit="6"/><path d="M13.500 3.200l4-2.400h3z" fill="#f0721c" opacity=".8"/></svg>
<svg class="a" style="left:774.500px;top:760px" width="21" height="21" viewBox="0 0 21 21"><circle cx="10" cy="10.500" r="8" fill="none" stroke="#2aa0e8" stroke-width="3.800"/><path d="M3.500 10.500h14" stroke="#2aa0e8" stroke-width="3.200"/><path d="M11 12.200h8.500v4.500h-8.500z" fill="#e5ebf5"/><path d="M1 6q6-7 18-2" stroke="#2aa0e8" stroke-width="1.800" fill="none"/><rect x="9.500" y="12.300" width="10.500" height="7.200" rx="2" fill="#7a4ae0"/><text x="14.800" y="18.200" font-family="Liberation Sans, sans-serif" font-size="6" font-weight="bold" fill="#fff" text-anchor="middle">AI</text></svg>
<svg class="a" style="left:814px;top:760px" width="17" height="21" viewBox="0 0 17 21"><rect x=".5" y=".5" width="16" height="20" rx="1.800" fill="#6a7580"/><rect x="2.300" y="2.300" width="12.400" height="3.800" fill="#3fc8f4"/><g fill="#e8ecef"><rect x="2.300" y="7.800" width="3.400" height="3.200"/><rect x="6.800" y="7.800" width="3.400" height="3.200"/><rect x="2.300" y="12" width="3.400" height="3.200"/><rect x="6.800" y="12" width="3.400" height="3.200"/><rect x="2.300" y="16.200" width="3.400" height="2.800"/><rect x="6.800" y="16.200" width="3.400" height="2.800"/></g><rect x="11.300" y="7.800" width="3.400" height="3.200" fill="#c8d0d6"/><rect x="11.300" y="12" width="3.400" height="7" fill="#1a5fb4"/></svg>
<div class="a" style="left:843.500px;top:754.500px;width:32.500px;height:33px;border-radius:4px;background:#f2f5fa;border:1px solid #e2e6ee"></div>
<svg class="a" style="left:849.500px;top:760.500px" width="20" height="20"><use href="#hlogo"/></svg><div class="t" style="left:861.500px;top:775px;font-size:5.500px;color:#8a8a8a">3D</div>
<div class="a" style="left:852.500px;top:783.800px;width:14px;height:2.400px;border-radius:1.200px;background:#1a6fd0"></div>
<div class="a" style="left:880px;top:754px;width:33px;height:33.500px;border-radius:4px;background:#e9b5b6"></div>
<svg class="a" style="left:886.500px;top:760px" width="21" height="21" viewBox="0 0 21 21"><rect x=".3" y=".3" width="20.400" height="20.400" rx="4.500" fill="#1fc25f"/><ellipse cx="8.300" cy="8.300" rx="5" ry="4.200" fill="#fff"/><path d="M5 11l-.8 2.300 2.800-1.300z" fill="#fff"/><ellipse cx="13.300" cy="12.300" rx="4.300" ry="3.600" fill="#fff" stroke="#1fc25f" stroke-width=".8"/><path d="M15.500 15l1.300 1.800-2.500-.8z" fill="#fff"/><g fill="#1fc25f"><circle cx="6.600" cy="7.200" r=".7"/><circle cx="10" cy="7.200" r=".7"/><circle cx="11.900" cy="11.500" r=".6"/><circle cx="14.700" cy="11.500" r=".6"/></g></svg>
<div class="a" style="left:893.500px;top:784px;width:6px;height:2.200px;border-radius:1.100px;background:#d0342c"></div>
<div class="a" style="left:670.0px;top:784px;width:5px;height:2.200px;border-radius:1.100px;background:#7e858e"></div>
<div class="a" style="left:744.5px;top:784px;width:5px;height:2.200px;border-radius:1.100px;background:#7e858e"></div>
<div class="a" style="left:819.5px;top:784px;width:5px;height:2.200px;border-radius:1.100px;background:#7e858e"></div>
<div class="a" style="left:633.0px;top:784px;width:5px;height:2.200px;border-radius:1.100px;background:#7e858e"></div>
<svg class="a" style="left:1010px;top:758px" width="245" height="26" viewBox="1010 758 245 26">
<path d="M1013.500 773l4.500-4.500 4.500 4.500" stroke="#222" stroke-width="1.300" fill="none"/>
<path d="M1039 766h3.500l2.500 6 2-6h5l-4.500 10h-4z" fill="#e8321e"/><path d="M1046 772q3-3 6 0 1.500 2.500-1 4h-5q-2-2 0-4z" fill="#2a9ae8"/>
<path d="M1067.500 775q-2.500-1-1.500-3.500 1-2 3-1.500 1.500-3.500 5-2.500 2.500 1 2.500 3.500" stroke="#444" stroke-width="1.200" fill="#8a8a8a"/><circle cx="1075.500" cy="773.500" r="3.700" fill="#1a73d8"/><rect x="1075" y="772.500" width="1" height="3" fill="#fff"/><rect x="1075" y="771" width="1" height="1" fill="#fff"/>
<g stroke="#222" stroke-width="1.100" fill="none" stroke-linecap="round"><path d="M1120.500 768.500q6-5.500 12 0M1122.500 771q4-3.500 8 0M1124.500 773.500q2-1.800 4 0"/></g><circle cx="1126.500" cy="775.500" r="1" fill="#222"/>
<g stroke="#222" stroke-width="1" fill="none"><path d="M1140.500 769h2.500l3-2.800v9.600l-3-2.800h-2.500zM1148.500 768.500l4.500 4.500M1153 768.500l-4.500 4.500"/></g>
<g stroke="#222" stroke-width="1" fill="none"><rect x="1161.500" y="766.500" width="10.500" height="7" rx="1.200"/><path d="M1173 768.500v3" stroke-width="1.400"/></g><rect x="1163" y="768" width="7.500" height="4" fill="#222"/><path d="M1161 765.500l2.500-2v2.500" stroke="#222" stroke-width="1" fill="none"/>
<path d="M1238 774.500q1.500-1 1.500-4a3.500 3.500 0 0 1 7 0q0 3 1.500 4zM1241.500 776.500a1.500 1.500 0 0 0 3 0" stroke="#222" stroke-width="1" fill="none"/>
</svg>
<div class="t" style="left:1092.500px;top:764.500px;font-size:12.500px;color:#222">英</div>
<div class="t" style="left:1180px;width:50px;text-align:right;top:759px;font-size:9.800px;color:#222">19:07</div>
<div class="t" style="left:1170px;width:60px;text-align:right;top:772.500px;font-size:9.800px;color:#222">2026/1/6</div>

</body></html>
